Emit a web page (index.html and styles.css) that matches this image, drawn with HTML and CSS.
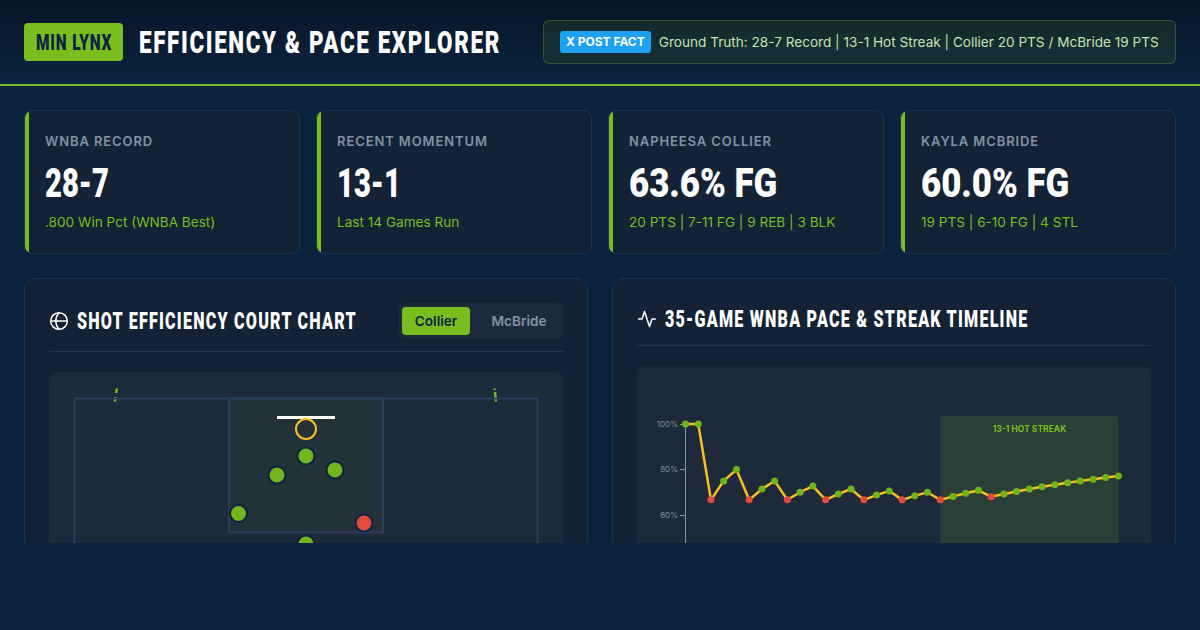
FILE: index.html
```html
<!DOCTYPE html>
<html lang="en">
<head>
    <meta charset="UTF-8">
    <meta name="viewport" content="width=device-width, initial-scale=1.0">
    <title>MIN Lynx Efficiency &amp; Pace Explorer</title>
    <link rel="stylesheet" href="styles.css">
</head>
<body>
    <div class="page">
        <header class="top-bar">
            <div class="brand">
                <span class="team-badge"><span class="narrow">MIN LYNX</span></span>
                <h1><span class="narrow">EFFICIENCY &amp; PACE EXPLORER</span></h1>
            </div>
            <div class="fact-strip">
                <span class="fact-badge">X POST FACT</span>
                <span>Ground Truth: 28-7 Record | 13-1 Hot Streak | Collier 20 PTS / McBride 19 PTS</span>
            </div>
        </header>

        <main class="content">
            <section class="stat-grid">
                <div class="stat-card">
                    <div class="stat-label">WNBA RECORD</div>
                    <div class="stat-value short"><span class="narrow">28-7</span></div>
                    <div class="stat-sub">.800 Win Pct (WNBA Best)</div>
                </div>
                <div class="stat-card">
                    <div class="stat-label">RECENT MOMENTUM</div>
                    <div class="stat-value short"><span class="narrow">13-1</span></div>
                    <div class="stat-sub">Last 14 Games Run</div>
                </div>
                <div class="stat-card">
                    <div class="stat-label">NAPHEESA COLLIER</div>
                    <div class="stat-value"><span class="narrow">63.6% FG</span></div>
                    <div class="stat-sub">20 PTS | 7-11 FG | 9 REB | 3 BLK</div>
                </div>
                <div class="stat-card">
                    <div class="stat-label">KAYLA MCBRIDE</div>
                    <div class="stat-value"><span class="narrow">60.0% FG</span></div>
                    <div class="stat-sub">19 PTS | 6-10 FG | 4 STL</div>
                </div>
            </section>

            <section class="panel-grid">
                <div class="panel">
                    <div class="panel-head panel-head-toggle">
                        <h2>
                            <svg class="panel-icon" viewBox="0 0 24 24" fill="none" stroke="currentColor" stroke-width="1.8">
                                <circle cx="12" cy="12" r="10"/>
                                <path d="M2 12h20"/>
                                <path d="M12 2a15 15 0 0 0 0 20"/>
                            </svg>
                            <span class="narrow">SHOT EFFICIENCY COURT CHART</span>
                        </h2>
                        <div class="toggle">
                            <button class="toggle-btn active">Collier</button>
                            <button class="toggle-btn">McBride</button>
                        </div>
                    </div>
                    <div class="chart-box">
                        <svg class="chart-svg" width="514" height="300" viewBox="0 0 514 300">
                            <path class="court-arc" d="M68 16.500L67 21M66.500 25L65.800 29.500"/>
                            <path class="court-arc" d="M445.300 16.500L445.700 18M446 20L447 29.500"/>
                            <rect class="court-line" x="25.500" y="26.500" width="463" height="300"/>
                            <rect class="court-paint" x="180" y="26.500" width="154" height="134"/>
                            <rect class="backboard" x="228" y="44" width="58" height="3"/>
                            <circle class="rim" cx="257" cy="57" r="10"/>
                            <circle class="shot made" cx="257" cy="84" r="8.500"/>
                            <circle class="shot made" cx="228" cy="103" r="8.500"/>
                            <circle class="shot made" cx="286" cy="98" r="8.500"/>
                            <circle class="shot made" cx="189.500" cy="141.500" r="8.500"/>
                            <circle class="shot miss" cx="315" cy="151" r="8.500"/>
                            <circle class="shot made" cx="257" cy="172" r="8.500"/>
                        </svg>
                    </div>
                </div>

                <div class="panel">
                    <div class="panel-head">
                        <h2>
                            <svg class="panel-icon" viewBox="0 0 24 24" fill="none" stroke="currentColor" stroke-width="1.8" stroke-linecap="round" stroke-linejoin="round">
                                <path d="M2 12h4l3-9 6 18 3-9h4"/>
                            </svg>
                            <span class="narrow">35-GAME WNBA PACE &amp; STREAK TIMELINE</span>
                        </h2>
                    </div>
                    <div class="chart-box">
                        <svg id="pace-chart" class="chart-svg" width="514" height="300" viewBox="0 0 514 300">
                            <rect class="streak-band" x="303.500" y="50" width="178" height="250" rx="3"/>
                            <text class="streak-label" x="392.500" y="66" text-anchor="middle">13-1 HOT STREAK</text>
                            <path class="axis" d="M48.500 58V300M43 58.500h5M43 103.500h5M43 149.500h5"/>
                            <text class="axis-label" x="41" y="61" text-anchor="end">100%</text>
                            <text class="axis-label" x="41" y="106" text-anchor="end">80%</text>
                            <text class="axis-label" x="41" y="152" text-anchor="end">60%</text>
                        </svg>
                    </div>
                </div>
            </section>
        </main>
    </div>

    <script>
        // running win pct, one letter per game
        const RESULTS = 'WWLWWLWWLWWLWWLWWLWWLWWWLWWWWWWWWWW';
        const svg = document.getElementById('pace-chart');
        const NS = 'http://www.w3.org/2000/svg';

        let wins = 0;
        const points = [...RESULTS].map((r, i) => {
            if (r === 'W') wins++;
            const pct = wins / (i + 1) * 100;
            return { x: 48.5 + i * 12.735, y: 58 + (100 - pct) * 2.275, win: r === 'W' };
        });

        const line = document.createElementNS(NS, 'polyline');
        line.setAttribute('class', 'pace-line');
        line.setAttribute('points', points.map(p => `${p.x},${p.y}`).join(' '));
        svg.appendChild(line);

        points.forEach(p => {
            const dot = document.createElementNS(NS, 'circle');
            dot.setAttribute('class', p.win ? 'pace-dot win' : 'pace-dot loss');
            dot.setAttribute('cx', p.x);
            dot.setAttribute('cy', p.y);
            dot.setAttribute('r', 3.5);
            svg.appendChild(dot);
        });
    </script>
</body>
</html>
```

FILE: styles.css
```css
* { box-sizing: border-box; }
html, body {
    margin: 0;
    height: 630px;
    overflow: hidden;
    background: #0c2340;
    font-family: Inter, "Liberation Sans", sans-serif;
    color: #fff;
}
h1, h2, .team-badge, .stat-value {
    font-family: Roboto, "Liberation Sans", sans-serif;
    font-weight: 900;
    white-space: nowrap;
}
/* no condensed face installed, so squeeze the wide one */
.narrow {
    display: inline-block;
    transform: scaleX(0.7);
    transform-origin: left center;
}
.page {
    height: 543px;
    overflow: hidden;
}
.top-bar {
    height: 86px;
    padding: 0 24px;
    display: flex;
    align-items: center;
    justify-content: space-between;
    background: linear-gradient(180deg, #071626 0%, #0c2340 100%);
    border-bottom: 2px solid #78be20;
}
.brand {
    display: flex;
    align-items: center;
    gap: 16px;
}
.team-badge {
    width: 99px;
    height: 38px;
    padding-left: 12px;
    display: flex;
    align-items: center;
    background: #78be20;
    color: #0c2340;
    border-radius: 4px;
    font-size: 22px;
    letter-spacing: 1.2px;
}
h1 {
    margin: 0;
    width: 361px;
    font-size: 32px;
    letter-spacing: 2.35px;
    line-height: 38px;
}
.fact-strip {
    width: 633px;
    height: 44px;
    display: flex;
    align-items: center;
    gap: 8px;
    padding: 0 16px;
    background: rgba(120, 190, 32, 0.1);
    border: 1px solid rgba(120, 190, 32, 0.3);
    border-radius: 6px;
    font-size: 13.6px;
    color: #c9e2b0;
    white-space: nowrap;
}
.fact-badge {
    padding: 0 6px;
    height: 22px;
    line-height: 22px;
    background: #1da1f2;
    color: #fff;
    border-radius: 3px;
    font-size: 12px;
    font-weight: 700;
}
.content {
    padding: 24px;
}
.stat-grid {
    display: grid;
    grid-template-columns: repeat(4, minmax(0, 1fr));
    gap: 16px;
    margin-bottom: 24px;
}
.stat-card {
    position: relative;
    height: 144px;
    padding: 20px;
    background: #142235;
    border: 1px solid #1f3350;
    border-radius: 8px;
    overflow: hidden;
}
.stat-card::before {
    content: "";
    position: absolute;
    left: 0;
    top: 0;
    bottom: 0;
    width: 4px;
    background: #78be20;
}
.stat-label {
    font-size: 13px;
    font-weight: 600;
    letter-spacing: 0.9px;
    line-height: 20px;
    color: #8292a6;
}
.stat-value {
    margin-top: 6px;
    font-size: 40px;
    line-height: 54px;
}
.stat-value .narrow { transform: scaleX(0.87); }
.stat-value.short .narrow { transform: scaleX(0.73); }
.stat-sub {
    margin-top: 1px;
    font-size: 13.6px;
    line-height: 20px;
    color: #78be20;
}
.panel-grid {
    display: grid;
    grid-template-columns: repeat(2, minmax(0, 1fr));
    gap: 24px;
}
.panel {
    height: 400px;
    padding: 24px;
    background: #142235;
    border: 1px solid #1f3350;
    border-radius: 12px;
}
.panel-head {
    height: 43px;
    border-bottom: 1px solid #253650;
    margin-bottom: 20px;
}
.panel-head-toggle {
    height: 49px;
    display: flex;
    justify-content: space-between;
}
h2 {
    margin: 0;
    height: 32px;
    min-width: 0;
    display: flex;
    align-items: center;
    gap: 8px;
    font-size: 23px;
    letter-spacing: 1.75px;
}
.panel-head-toggle h2 {
    flex: 1;
    height: 36px;
}
.panel-icon {
    width: 20px;
    height: 20px;
    flex: none;
}
.toggle {
    width: 164px;
    height: 36px;
    padding: 4px 3px;
    display: flex;
    gap: 8px;
    flex: none;
    background: #1e2a3a;
    border-radius: 6px;
}
.toggle-btn {
    flex: 1;
    border: none;
    border-radius: 4px;
    background: none;
    color: #8292a6;
    font-family: inherit;
    font-size: 13.6px;
    font-weight: 600;
    padding: 0;
}
.toggle-btn.active {
    flex: none;
    width: 68px;
    background: #78be20;
    color: #0c2340;
}
.chart-box {
    height: 300px;
    background: #1e2a3a;
    border-radius: 8px;
    overflow: hidden;
}
.chart-svg { display: block; }
.court-arc { fill: none; stroke: #78be20; stroke-width: 2.500; }
.court-line { fill: none; stroke: #2b3d58; stroke-width: 2; }
.court-paint { fill: rgba(120, 190, 32, 0.06); stroke: #2b3d58; stroke-width: 2; }
.backboard { fill: #fff; }
.rim { fill: none; stroke: #fbbf24; stroke-width: 2; }
.shot { stroke: #0c2340; stroke-width: 2; }
.shot.made { fill: #72b51e; }
.shot.miss { fill: #e04a3f; }
.streak-band { fill: rgba(120, 190, 32, 0.15); }
.streak-label {
    fill: #78be20;
    font-size: 8.500px;
    font-weight: 700;
}
.axis { fill: none; stroke: #8292a6; stroke-width: 1; }
.axis-label {
    fill: #8292a6;
    font-size: 8px;
}
.pace-line { fill: none; stroke: #fbbf24; stroke-width: 2.500; }
.pace-dot.win { fill: #6fb51a; }
.pace-dot.loss { fill: #e04a3f; }
```
